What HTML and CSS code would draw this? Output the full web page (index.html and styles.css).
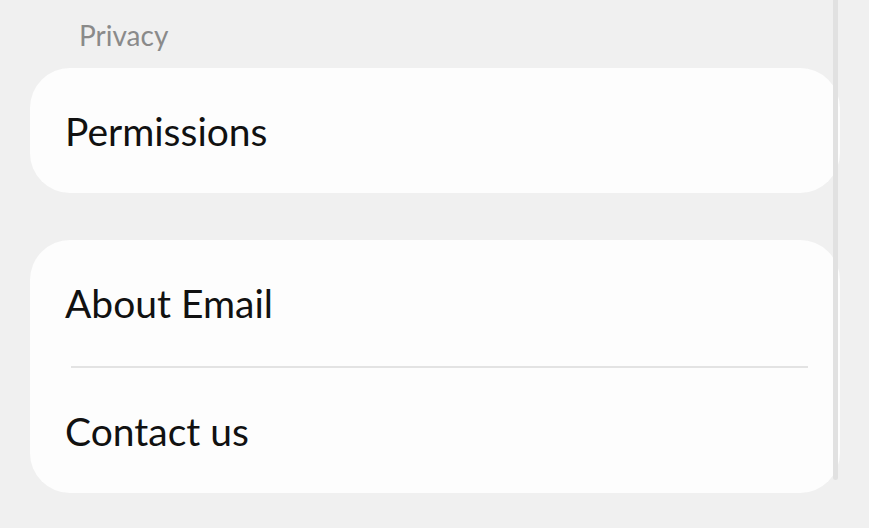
FILE: index.html
```html
<!DOCTYPE html>
<html lang="en">
<head>
    <meta charset="UTF-8">
    <meta name="viewport" content="width=device-width, initial-scale=1.0">
    <title>Email Settings</title>
    <link rel="stylesheet" href="styles.css">
</head>
<body>
    <div class="settings">
        <!-- Privacy group -->
        <h3 class="group-title">Privacy</h3>
        <div class="card">
            <div class="row">Permissions</div>
        </div>

        <!-- About group -->
        <div class="card card-about">
            <div class="row row-first">About Email</div>
            <div class="divider"></div>
            <div class="row row-last">Contact us</div>
        </div>
    </div>

    <!-- scroll indicator sits over the right edge of the list -->
    <div class="scrollbar"></div>
</body>
</html>
```

FILE: styles.css
```css
body {
    margin: 0;
    background-color: #f0f0f0;
    font-family: 'Lato', 'Roboto', sans-serif;
    height: 528px;
    overflow: hidden;
}
.settings {
    width: 810px;
    padding-left: 30px;
}
.group-title {
    margin: 0;
    padding: 18px 0 0 49px;
    height: 50px;
    font-size: 28px;
    line-height: 34px;
    font-weight: normal;
    color: #8a8a8a;
}
.card {
    background-color: #fdfdfd;
    border-radius: 40px;
}
.card-about {
    margin-top: 47px;
}
.row {
    display: flex;
    align-items: center;
    height: 125px;
    padding-left: 35px;
    font-size: 39px;
    color: #111111;
}
.row-first {
    height: 126px;
}
.divider {
    height: 2px;
    margin: 0 32px 0 41px;
    background-color: #e3e3e3;
}
.scrollbar {
    position: absolute;
    top: 0;
    left: 833px;
    width: 5px;
    height: 480px;
    background-color: #e1e1e1;
    border-radius: 0 0 3px 3px;
}
```
